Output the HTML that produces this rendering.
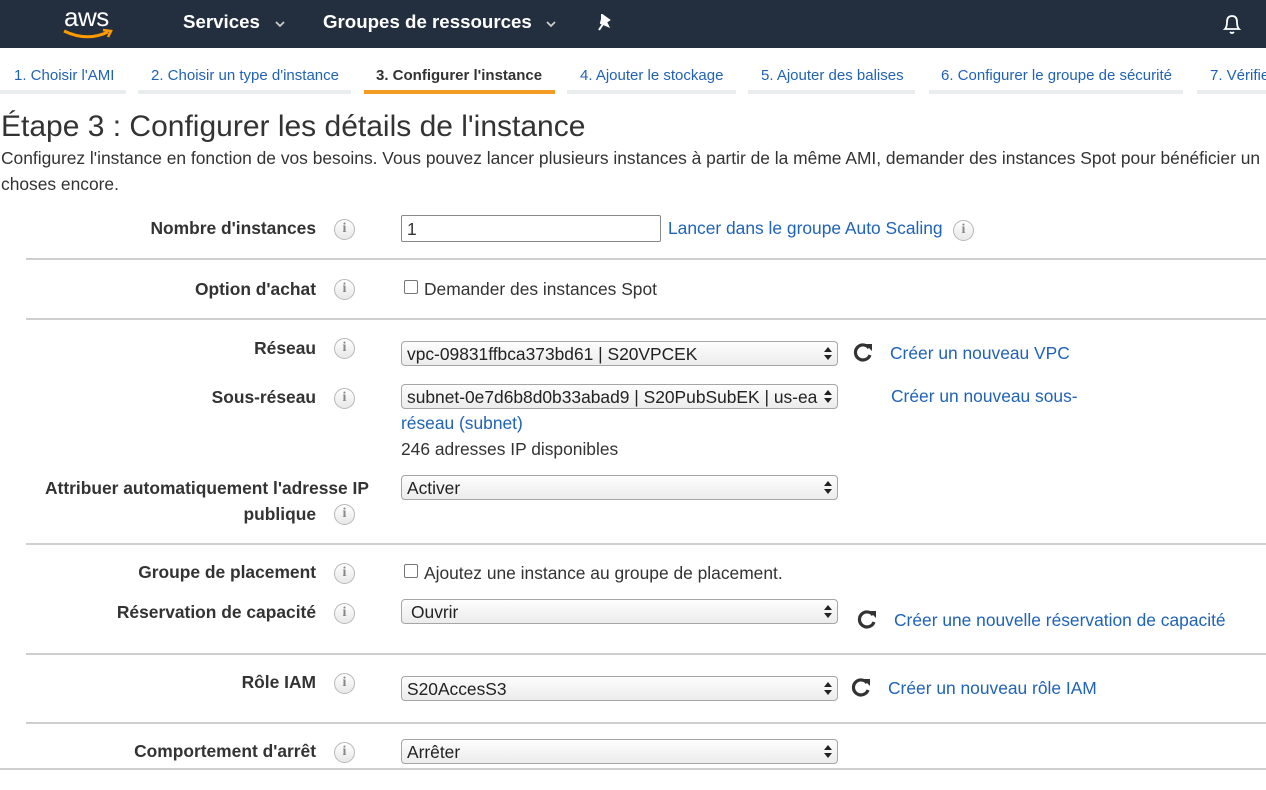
<!DOCTYPE html>
<html><head><meta charset="utf-8"><style>
*{margin:0;padding:0;box-sizing:border-box}
body{width:1266px;height:790px;overflow:hidden;background:#fff;font-family:"Liberation Sans",Arial,sans-serif;color:#333;position:relative}
.a{position:absolute;white-space:nowrap}
.nav{position:absolute;left:0;top:0;width:1266px;height:48px;background:#232f3e}
.nt{color:#fff;font-weight:bold;font-size:18.7px;top:11px}
.tab{top:66px;font-size:15px;color:#2162b6}
.bar{position:absolute;top:90px;height:4px;background:#eaeded}
.lbl{font-weight:bold;font-size:17.4px;text-align:right;color:#333}
.info{position:absolute;width:21px;height:21px;border:1.5px solid #b8b8b8;border-radius:50%;background:linear-gradient(#fff,#e8e8e8)}
.info:after{content:"i";position:absolute;left:0;right:0;top:1px;text-align:center;font:bold 14px "Liberation Serif",serif;color:#888}
.hr{position:absolute;left:26px;right:0;height:1.5px;background:#cfcfcf}
.sel{position:absolute;height:25px;border:1px solid #a6a6a6;border-radius:4px;background:linear-gradient(#fdfdfd,#ececec);font-size:17.4px;padding:2px 5px;color:#222;overflow:hidden;white-space:nowrap}
.sel:after{content:"";position:absolute;right:5px;top:5px;width:0;height:0;border-left:4px solid transparent;border-right:4px solid transparent;border-bottom:5px solid #222}
.sel:before{content:"";position:absolute;right:5px;top:13px;width:0;height:0;border-left:4px solid transparent;border-right:4px solid transparent;border-top:5px solid #222}
.lnk{color:#1f62b8;font-size:17.4px}
.txt{font-size:17.4px;color:#333}
.cb{position:absolute;width:14px;height:14px;border:1px solid #767676;border-radius:2px;background:#fff}
</style></head><body>
<div class="nav"></div>
<div class="a" style="left:64px;top:2px;color:#fff;font-size:26px;letter-spacing:-0.5px">aws</div>
<svg class="a" style="left:62px;top:28px" width="52" height="12"><path d="M2 3 Q25 14 46 4" stroke="#f90" stroke-width="3" fill="none"/><path d="M41 2 L49 3 L46 9" stroke="#f90" stroke-width="2.5" fill="none"/></svg>
<div class="a nt" style="left:183px">Services</div>
<svg class="a" style="left:275px;top:21px" width="10" height="7"><path d="M1 1 L5 5 L9 1" stroke="#ccc" stroke-width="1.8" fill="none"/></svg>
<div class="a nt" style="left:323px">Groupes de ressources</div>
<svg class="a" style="left:546px;top:21px" width="10" height="7"><path d="M1 1 L5 5 L9 1" stroke="#ccc" stroke-width="1.8" fill="none"/></svg>
<svg class="a" style="left:597px;top:14px" width="16" height="18"><path d="M5 1 L12 6 L9 8 L11 12 L4 9 L5 5Z M6 10 L2 16" stroke="#fff" stroke-width="2" fill="#fff"/></svg>
<svg class="a" style="left:1221px;top:12px" width="22" height="24"><path d="M4 17 Q6 15 6 10 Q6 4 11 4 Q16 4 16 10 Q16 15 18 17 Z" stroke="#fff" stroke-width="1.8" fill="none"/><path d="M9 20 Q11 22 13 20" stroke="#fff" stroke-width="1.8" fill="none"/></svg>

<div class="a tab" style="left:14px;top:67px">1. Choisir l'AMI</div>
<div class="a tab" style="left:151px;top:67px">2. Choisir un type d'instance</div>
<div class="a tab" style="left:376px;top:67px;color:#333;font-weight:bold">3. Configurer l'instance</div>
<div class="a tab" style="left:580px;top:67px">4. Ajouter le stockage</div>
<div class="a tab" style="left:761px;top:67px">5. Ajouter des balises</div>
<div class="a tab" style="left:941px;top:67px">6. Configurer le groupe de sécurité</div>
<div class="a tab" style="left:1210px;top:67px">7. Vérifier</div>
<div class="bar" style="left:0;width:126px"></div>
<div class="bar" style="left:138px;width:213px"></div>
<div class="bar" style="left:364px;width:191px;background:#f49b24"></div>
<div class="bar" style="left:567px;width:169px"></div>
<div class="bar" style="left:748px;width:167px"></div>
<div class="bar" style="left:929px;width:254px"></div>
<div class="bar" style="left:1197px;width:80px"></div>

<div class="a" style="left:1px;top:110px;font-size:30px;color:#333">Étape 3 : Configurer les détails de l'instance</div>
<div class="a txt" style="left:1px;top:148px">Configurez l'instance en fonction de vos besoins. Vous pouvez lancer plusieurs instances à partir de la même AMI, demander des instances Spot pour bénéficier un</div>
<div class="a txt" style="left:1px;top:174px">choses encore.</div>

<div class="a lbl" style="right:950px;top:218px">Nombre d'instances</div>
<div class="info" style="left:334px;top:219px"></div>
<div class="a" style="left:401px;top:215px;width:260px;height:27px;border:1px solid #888;border-radius:2px;font-size:17.4px;padding:3px 5px">1</div>
<div class="a lnk" style="left:668px;top:218px">Lancer dans le groupe Auto Scaling</div>
<div class="info" style="left:953px;top:220px"></div>
<div class="hr" style="top:258px"></div>

<div class="a lbl" style="right:950px;top:279px">Option d'achat</div>
<div class="info" style="left:334px;top:279px"></div>
<div class="cb" style="left:404px;top:280px"></div>
<div class="a txt" style="left:424px;top:279px">Demander des instances Spot</div>
<div class="hr" style="top:318px"></div>

<div class="a lbl" style="right:950px;top:338px">Réseau</div>
<div class="info" style="left:334px;top:338px"></div>
<div class="sel" style="left:401px;top:341px;width:437px">vpc-09831ffbca373bd61 | S20VPCEK</div>
<svg class="a" style="left:852px;top:341px" width="22" height="22"><path d="M17 7 A7.5 7.5 0 1 0 18 14" stroke="#333" stroke-width="3.2" fill="none"/><path d="M13 3 L20 3 L20 10 Z" fill="#333"/></svg>
<div class="a lnk" style="left:890px;top:343px">Créer un nouveau VPC</div>

<div class="a lbl" style="right:950px;top:387px">Sous-réseau</div>
<div class="info" style="left:334px;top:388px"></div>
<div class="sel" style="left:401px;top:384px;width:437px;padding-right:22px">subnet-0e7d6b8d0b33abad9 | S20PubSubEK | us-ea</div>
<div class="a lnk" style="left:891px;top:386px">Créer un nouveau sous-</div>
<div class="a lnk" style="left:401px;top:413px">réseau (subnet)</div>
<div class="a txt" style="left:401px;top:439px">246 adresses IP disponibles</div>

<div class="a lbl" style="right:897px;top:478px">Attribuer automatiquement l'adresse IP</div>
<div class="a lbl" style="right:950px;top:504px">publique</div>
<div class="info" style="left:334px;top:504px"></div>
<div class="sel" style="left:401px;top:475px;width:437px">Activer</div>
<div class="hr" style="top:543px"></div>

<div class="a lbl" style="right:950px;top:562px">Groupe de placement</div>
<div class="info" style="left:334px;top:563px"></div>
<div class="cb" style="left:404px;top:564px"></div>
<div class="a txt" style="left:424px;top:563px">Ajoutez une instance au groupe de placement.</div>

<div class="a lbl" style="right:950px;top:602px">Réservation de capacité</div>
<div class="info" style="left:334px;top:603px"></div>
<div class="sel" style="left:401px;top:599px;width:437px;padding-left:9px">Ouvrir</div>
<svg class="a" style="left:856px;top:608px" width="22" height="22"><path d="M17 7 A7.5 7.5 0 1 0 18 14" stroke="#333" stroke-width="3.2" fill="none"/><path d="M13 3 L20 3 L20 10 Z" fill="#333"/></svg>
<div class="a lnk" style="left:894px;top:610px">Créer une nouvelle réservation de capacité</div>
<div class="hr" style="top:653px"></div>

<div class="a lbl" style="right:950px;top:672px">Rôle IAM</div>
<div class="info" style="left:334px;top:673px"></div>
<div class="sel" style="left:401px;top:676px;width:437px">S20AccesS3</div>
<svg class="a" style="left:850px;top:676px" width="22" height="22"><path d="M17 7 A7.5 7.5 0 1 0 18 14" stroke="#333" stroke-width="3.2" fill="none"/><path d="M13 3 L20 3 L20 10 Z" fill="#333"/></svg>
<div class="a lnk" style="left:888px;top:678px">Créer un nouveau rôle IAM</div>
<div class="hr" style="top:722px"></div>

<div class="a lbl" style="right:950px;top:741px">Comportement d'arrêt</div>
<div class="info" style="left:334px;top:742px"></div>
<div class="sel" style="left:401px;top:739px;width:437px">Arrêter</div>
<div class="hr" style="top:768px;left:0"></div>
</body></html>
